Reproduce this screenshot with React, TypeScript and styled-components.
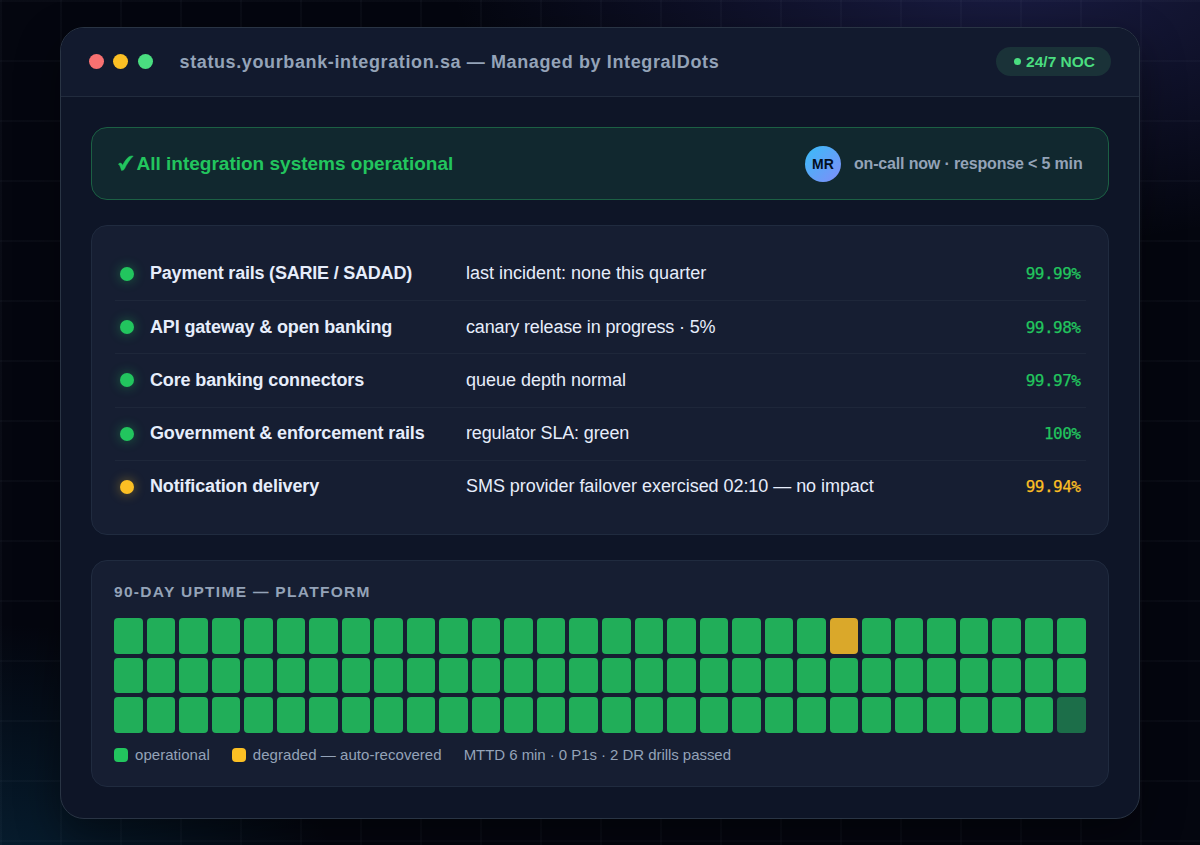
import React from "react";
import styled, { createGlobalStyle } from "styled-components";

const Global = createGlobalStyle`
  * { box-sizing: border-box; }
  html, body { margin: 0; height: 100%; }
  body {
    overflow: hidden;
    font-family: "Liberation Sans", Arial, sans-serif;
    background: #04060f;
    color: #e6edfb;
  }
`;

const GREEN = "#22c55e";
const AMBER = "#fbbf24";
const MUTED = "#94a3b8";

const Stage = styled.main`
  width: 1200px;
  height: 845px;
  padding: 27px 60px 26px;
  background:
    repeating-linear-gradient(90deg, rgba(148, 163, 184, 0.04) 0 2px, transparent 2px 60px),
    repeating-linear-gradient(180deg, rgba(148, 163, 184, 0.04) 0 2px, transparent 2px 60px),
    radial-gradient(700px 350px at 84% -4%, rgba(99, 102, 241, 0.23), transparent 80%),
    radial-gradient(420px 340px at 0% 106%, rgba(14, 100, 144, 0.28), transparent 80%),
    #04060f;
`;

const Window = styled.section`
  display: flex;
  flex-direction: column;
  height: 792px;
  border: 1px solid #293444;
  border-radius: 24px;
  background: #0e1527;
  box-shadow: 0 16px 44px rgba(0, 0, 0, 0.42);
  overflow: hidden;
`;

const TitleBar = styled.header`
  display: flex;
  align-items: center;
  height: 69px;
  padding: 0 28px 1px 27.5px;
  background: #121a2e;
  border-bottom: 1px solid #212b3d;
`;

const Lights = styled.div`
  display: flex;
  gap: 9.5px;
`;

const Light = styled.span<{ $color: string }>`
  width: 15px;
  height: 15px;
  border-radius: 50%;
  background: ${(p) => p.$color};
`;

const Address = styled.h1`
  margin: 0 auto 0 27px;
  font-size: 18px;
  line-height: 22px;
  font-weight: 700;
  letter-spacing: 0.62px;
  color: ${MUTED};
  white-space: nowrap;
`;

const Badge = styled.span`
  display: flex;
  align-items: center;
  gap: 5px;
  height: 29px;
  padding: 0 16px 0 18px;
  border-radius: 15px;
  background: #1a3238;
  color: #4ade80;
  font-size: 15.5px;
  font-weight: 700;
  white-space: nowrap;
`;

const BadgeDot = styled.i`
  width: 7px;
  height: 7px;
  border-radius: 50%;
  background: currentColor;
`;

const Body = styled.div`
  display: flex;
  flex-direction: column;
  gap: 25px;
  padding: 30px 30px 0;
`;

const Banner = styled.div`
  display: flex;
  align-items: center;
  height: 73px;
  padding: 0 25.5px 0 24.5px;
  border: 1px solid #1c6044;
  border-radius: 16px;
  background: #11282f;
`;

const BannerText = styled.strong`
  display: flex;
  align-items: center;
  gap: 3px;
  margin-right: auto;
  font-size: 19px;
  color: ${GREEN};
  white-space: nowrap;
`;

const Avatar = styled.span`
  display: grid;
  place-items: center;
  width: 36px;
  height: 36px;
  margin-right: 13px;
  border-radius: 50%;
  background: linear-gradient(135deg, #38bdf8, #818cf8);
  color: #04101f;
  font-size: 14px;
  font-weight: 700;
`;

const OnCall = styled.span`
  font-size: 16px;
  font-weight: 700;
  letter-spacing: -0.16px;
  color: ${MUTED};
  white-space: nowrap;
`;

const Card = styled.div`
  border: 1px solid #202b3f;
  border-radius: 16px;
  background: #161e32;
`;

const Services = styled(Card)`
  height: 310px;
  padding: 21px 22.5px;
`;

const Service = styled.div`
  display: grid;
  grid-template-columns: 35.5px 316px 1fr auto;
  align-items: center;
  height: 53.2px;
  padding-right: 5px;
  font-size: 18px;
  white-space: nowrap;

  & + & {
    border-top: 1px solid #1e273a;
  }
`;

const StatusDot = styled.i<{ $color: string }>`
  width: 14px;
  height: 14px;
  margin-left: 5px;
  border-radius: 50%;
  background: ${(p) => p.$color};
  box-shadow: 0 0 12px ${(p) => p.$color}70;
`;

const Name = styled.b<{ $tracking: number }>`
  letter-spacing: ${(p) => p.$tracking}px;
`;

const Note = styled.span<{ $tracking: number }>`
  letter-spacing: ${(p) => p.$tracking}px;
`;

const Percent = styled.span<{ $color: string }>`
  font-family: "DejaVu Sans Mono", monospace;
  font-size: 16px;
  letter-spacing: -0.5px;
  color: ${(p) => p.$color};
  -webkit-text-stroke: 0.25px currentColor;
`;

const Uptime = styled(Card)`
  display: flex;
  flex-direction: column;
  height: 227px;
  padding: 22px 22px 0;
`;

const UptimeTitle = styled.h2`
  margin: 0;
  font-size: 15.5px;
  line-height: 18px;
  letter-spacing: 1.31px;
  color: ${MUTED};
`;

const Days = styled.div`
  display: grid;
  grid-template-columns: repeat(30, 1fr);
  grid-auto-rows: 35.5px;
  gap: 4px;
  margin-top: 17px;
`;

const Day = styled.span<{ $state: string }>`
  border-radius: 4px;
  background: ${(p) => (p.$state === "degraded" ? "#daa82a" : p.$state === "today" ? "#1c6e49" : "#21ae59")};
`;

const Legend = styled.div`
  display: flex;
  align-items: center;
  gap: 22px;
  margin-top: 13.5px;
  font-size: 15px;
  line-height: 18px;
  color: ${MUTED};
  white-space: nowrap;
`;

const LegendItem = styled.span`
  display: flex;
  align-items: center;
  gap: 7px;
  letter-spacing: 0.05px;
`;

const LegendNote = styled.span`
  letter-spacing: -0.05px;
`;

const Swatch = styled.i<{ $color: string }>`
  width: 14px;
  height: 14px;
  border-radius: 4px;
  background: ${(p) => p.$color};
`;

const services = [
  { name: "Payment rails (SARIE / SADAD)", nameTracking: -0.21, note: "last incident: none this quarter", noteTracking: 0, pct: "99.99%", color: GREEN },
  { name: "API gateway & open banking", nameTracking: -0.15, note: "canary release in progress · 5%", noteTracking: -0.15, pct: "99.98%", color: GREEN },
  { name: "Core banking connectors", nameTracking: -0.13, note: "queue depth normal", noteTracking: 0, pct: "99.97%", color: GREEN },
  { name: "Government & enforcement rails", nameTracking: -0.15, note: "regulator SLA: green", noteTracking: -0.15, pct: "100%", color: GREEN },
  { name: "Notification delivery", nameTracking: -0.14, note: "SMS provider failover exercised 02:10 — no impact", noteTracking: -0.05, pct: "99.94%", color: AMBER },
];

const days = Array.from({ length: 90 }, (_, i) => (i === 22 ? "degraded" : i === 89 ? "today" : "ok"));

export default function App() {
  return (
    <Stage>
      <Global />
      <Window>
        <TitleBar>
          <Lights>
            <Light $color="#f87171" />
            <Light $color={AMBER} />
            <Light $color="#4ade80" />
          </Lights>
          <Address>status.yourbank-integration.sa — Managed by IntegralDots</Address>
          <Badge>
            <BadgeDot />
            24/7 NOC
          </Badge>
        </TitleBar>
        <Body>
          <Banner>
            <BannerText>
              <svg width="17" height="17" viewBox="0 0 17 17" aria-hidden="true">
                <path
                  d="M1.400 9.200C2.200 8 4 7.600 4.800 8.900L5.600 10.300C7.300 6.800 9.600 3.600 12 1.800C13.100 1 14.600.9 16.200 1.100C12.700 4.700 9.800 9 7.500 13.800C7 14.900 6 15.400 4.500 15.400C4 13.600 3.100 11.300 2.400 10.100C2.100 9.600 1.700 9.400 1.400 9.200Z"
                  fill="currentColor"
                  stroke="currentColor"
                  strokeWidth="0.5"
                  strokeLinejoin="round"
                />
              </svg>
              All integration systems operational
            </BannerText>
            <Avatar>MR</Avatar>
            <OnCall>on-call now · response &lt; 5 min</OnCall>
          </Banner>
          <Services>
            {services.map((s) => (
              <Service key={s.name}>
                <StatusDot $color={s.color} />
                <Name $tracking={s.nameTracking}>{s.name}</Name>
                <Note $tracking={s.noteTracking}>{s.note}</Note>
                <Percent $color={s.color}>{s.pct}</Percent>
              </Service>
            ))}
          </Services>
          <Uptime>
            <UptimeTitle>90-DAY UPTIME — PLATFORM</UptimeTitle>
            <Days>
              {days.map((state, i) => (
                <Day key={i} $state={state} />
              ))}
            </Days>
            <Legend>
              <LegendItem>
                <Swatch $color={GREEN} />
                operational
              </LegendItem>
              <LegendItem>
                <Swatch $color={AMBER} />
                degraded — auto-recovered
              </LegendItem>
              <LegendNote>MTTD 6 min · 0 P1s · 2 DR drills passed</LegendNote>
            </Legend>
          </Uptime>
        </Body>
      </Window>
    </Stage>
  );
}
